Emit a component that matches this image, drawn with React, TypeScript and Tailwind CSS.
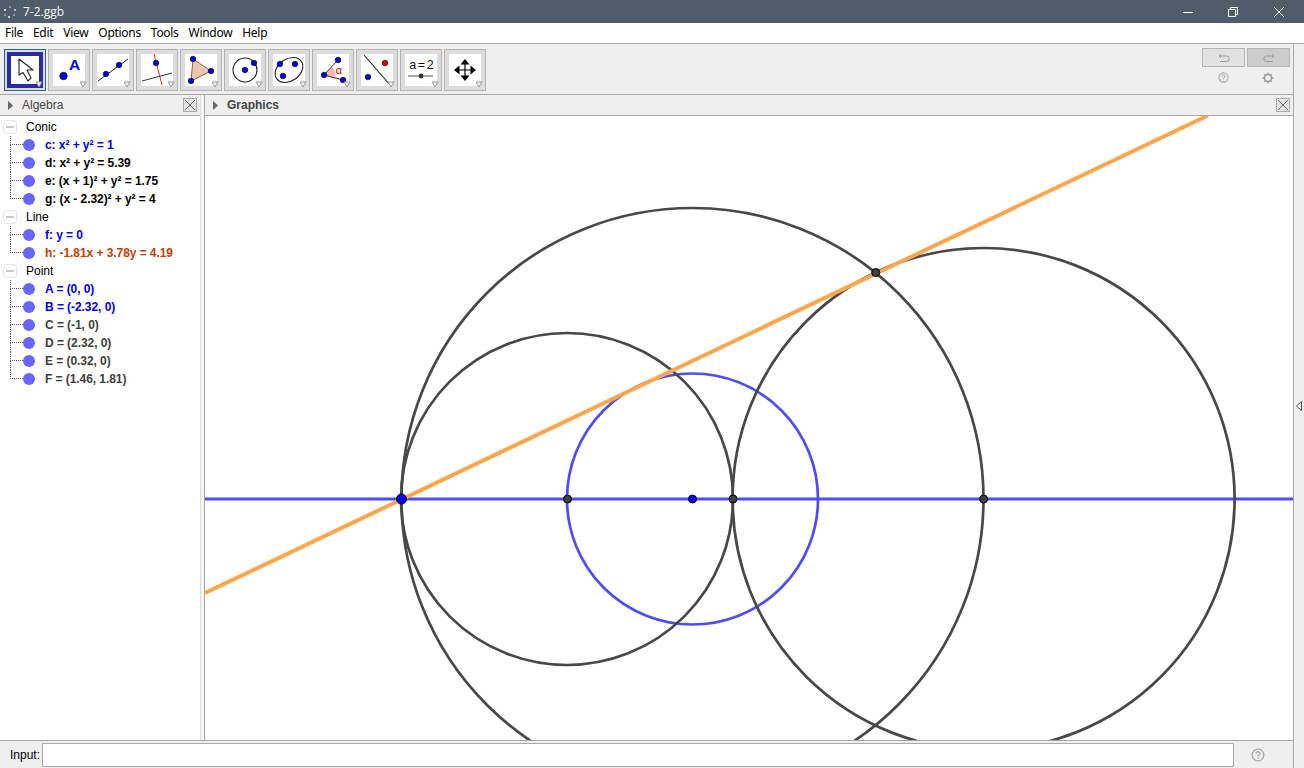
import type { ReactNode } from "react";

const conics = [
  { text: <>c: x² + y² = 1</>, color: "text-[#0000ff]" },
  { text: <>d: x² + y² = 5.39</>, color: "text-black" },
  { text: <>e: (x + 1)² + y² = 1.75</>, color: "text-black" },
  { text: <>g: (x - 2.32)² + y² = 4</>, color: "text-black" },
];
const lines = [
  { text: <>f: y = 0</>, color: "text-[#0000ff]" },
  { text: <>h: -1.81x + 3.78y = 4.19</>, color: "text-[#c83c00]" },
];
const points = [
  { text: <>A = (0, 0)</>, color: "text-[#0000ff]" },
  { text: <>B = (-2.32, 0)</>, color: "text-[#0000ff]" },
  { text: <>C = (-1, 0)</>, color: "text-[#404040]" },
  { text: <>D = (2.32, 0)</>, color: "text-[#404040]" },
  { text: <>E = (0.32, 0)</>, color: "text-[#404040]" },
  { text: <>F = (1.46, 1.81)</>, color: "text-[#404040]" },
];

function Group({ name, items }: { name: string; items: { text: ReactNode; color: string }[] }) {
  return (
    <div>
      <div className="flex h-[18px] items-center">
        <div className="ml-[3px] flex h-[14px] w-[14px] items-center justify-center rounded-[3px] border border-[#e6e6e6]">
          <div className="h-[2px] w-[8px] bg-[#c8c8c8]" />
        </div>
        <span className="ml-[9px] text-[12px] text-black">{name}</span>
      </div>
      {items.map((item, i) => (
        <div key={i} className="flex h-[18px] items-center">
          <div className="ml-[10px] h-[18px] w-[13px] flex-none">
            <div className="h-[9px] border-b border-l border-dotted border-[#555]" />
            {i < items.length - 1 && <div className="h-[9px] border-l border-dotted border-[#555]" />}
          </div>
          <div className="h-[12px] w-[12px] flex-none rounded-full bg-[#6666ff]" />
          <span className={`ml-[10px] text-[12px] font-bold tracking-[-0.06px] whitespace-nowrap ${item.color}`}>{item.text}</span>
        </div>
      ))}
    </div>
  );
}

function Dot({ x, y, r = 2.8, fill = "#0000e0" }: { x: number; y: number; r?: number; fill?: string }) {
  return <circle cx={x} cy={y} r={r} fill={fill} stroke="#000" strokeWidth="0.6" />;
}

function Corner() {
  return (
    <svg className="absolute right-[2px] bottom-[2px]" width="8" height="7" viewBox="0 0 8 7">
      <path d="M1 1h6L4 6z" fill="#f4f4f4" stroke="#999" />
    </svg>
  );
}

function Tool({ children }: { children: ReactNode }) {
  return (
    <div className="relative flex h-[42px] w-[42px] flex-none items-center justify-center border border-[#b4b4b4] bg-[#dcdcdc]">
      <div className="h-[32px] w-[32px] bg-white">
        <svg width="32" height="32" viewBox="0 0 32 32">{children}</svg>
      </div>
      <Corner />
    </div>
  );
}

function CloseBox() {
  return (
    <div className="flex h-[14px] w-[14px] flex-none items-center justify-center border border-[#aaa] bg-[#e4e4e4]">
      <svg width="12" height="12" viewBox="0 0 12 12">
        <path d="M1 1l10 10M11 1L1 11" stroke="#666" strokeWidth="1" />
      </svg>
    </div>
  );
}

function HelpIcon({ size }: { size: number }) {
  return (
    <svg width={size} height={size} viewBox="0 0 12 12">
      <circle cx="6" cy="6" r="5" fill="none" stroke="#aaa" strokeWidth="1.200" />
      <path d="M4.400 4.800c0-2.100 3.300-2.100 3.300-.1 0 1.200-1.700 1.200-1.700 2.600M6 8.200v1.200" fill="none" stroke="#aaa" strokeWidth="1.100" />
    </svg>
  );
}

export default function App() {
  return (
    <div className="flex h-[768px] w-[1304px] flex-col overflow-hidden bg-white font-['Liberation_Sans',sans-serif]">
      {/* Title bar */}
      <div className="flex h-[23px] flex-none items-center bg-[#505c6a] text-white">
        <svg className="ml-[3px]" width="14" height="14" viewBox="0 0 14 14">
          <circle cx="7" cy="2" r="1" fill="#8fa8e8" />
          <circle cx="2" cy="5" r="1" fill="#fff" />
          <circle cx="12" cy="5" r="1" fill="#dbe4f5" />
          <circle cx="2" cy="10" r="1" fill="#8fa8e8" />
          <circle cx="11" cy="10" r="1" fill="#8fa8e8" />
          <circle cx="6" cy="12" r="1" fill="#fff" />
        </svg>
        <span className="ml-[6px] font-['Open_Sans',sans-serif] text-[12px]">7-2.ggb</span>
        <div className="ml-auto flex items-center">
          <svg width="10" height="10" viewBox="0 0 10 10" className="mr-[35px]"><path d="M0 5.500h10" stroke="#fff" /></svg>
          <svg width="10" height="10" viewBox="0 0 10 10" className="mr-[36px]"><path d="M.5 2.500h7v7h-7zM2.500 2.500v-2h7v7h-2" fill="none" stroke="#fff" /></svg>
          <svg width="10" height="10" viewBox="0 0 10 10" className="mr-[20px]"><path d="M0 0l10 10M10 0L0 10" stroke="#fff" /></svg>
        </div>
      </div>

      {/* Menu bar */}
      <div className="flex h-[20px] flex-none items-center gap-[10px] pl-[5px] font-['Noto_Sans',sans-serif] text-[12px] tracking-[-0.3px] text-black">
        {["File", "Edit", "View", "Options", "Tools", "Window", "Help"].map((m) => (
          <span key={m}>{m}</span>
        ))}
      </div>

      <div className="flex min-h-0 flex-1 border-t border-[#a8a8a8]">
        <div className="flex min-w-0 flex-1 flex-col">
          {/* Toolbar */}
          <div className="flex h-[51px] flex-none items-start border-b border-[#a8a8a8] bg-[#efefef]">
            <div className="mt-[5px] ml-[4px] flex gap-[2px]">
              <div className="relative flex h-[42px] w-[42px] flex-none items-center justify-center border border-[#1f6a9a] bg-[#dcdcdc]">
                <div className="h-[36px] w-[36px] border-[4px] border-[#2a2aa5] bg-white">
                  <svg width="28" height="28" viewBox="0 0 28 28">
                    <path d="M8 3v16l4-2.500 5 8.500 3-3-4-8h6z" fill="#fff" stroke="#222" strokeWidth="1.100" strokeLinejoin="round" />
                  </svg>
                </div>
                <Corner />
              </div>
              <Tool>
                <Dot x={10.500} y={22} r={3.800} />
                <text x="16" y="16" fontSize="15.500" fontWeight="700" fill="#0000ff" fontFamily="Liberation Sans, sans-serif">A</text>
              </Tool>
              <Tool>
                <path d="M1 27L31 5" stroke="#222" strokeWidth="1" />
                <Dot x={9} y={20} />
                <Dot x={22} y={11} />
              </Tool>
              <Tool>
                <path d="M13 0l8 31" stroke="#e83030" strokeWidth="1" />
                <path d="M1 27l30-8" stroke="#333" strokeWidth="1" />
                <Dot x={15} y={9} />
              </Tool>
              <Tool>
                <path d="M8 5l18 12-20 10z" fill="#e8c8b4" stroke="#a85a30" strokeWidth="1" />
                <Dot x={8} y={5} />
                <Dot x={26} y={17} />
                <Dot x={6} y={27} />
              </Tool>
              <Tool>
                <circle cx="16" cy="16" r="12" fill="none" stroke="#222" strokeWidth="1.100" />
                <Dot x={16} y={16} />
                <Dot x={25} y={9} />
              </Tool>
              <Tool>
                <ellipse cx="16" cy="16" rx="15" ry="11" fill="none" stroke="#222" strokeWidth="1.100" transform="rotate(-35 16 16)" />
                <Dot x={7} y={10} />
                <Dot x={22} y={10} />
                <Dot x={10} y={22} />
              </Tool>
              <Tool>
                <path d="M7 21l7.500-8.500a11.500 11.500 0 0 1 3.500 12.500z" fill="#f8b8b8" />
                <path d="M7 21L21 6M7 21l19 5" stroke="#333" strokeWidth="1" />
                <Dot x={7} y={21} />
                <Dot x={21} y={6} />
                <Dot x={26} y={26} />
                <text x="22" y="20" fontSize="11" textAnchor="middle" fill="#e00000" fontFamily="Liberation Sans, sans-serif">α</text>
              </Tool>
              <Tool>
                <path d="M3 1l26 30" stroke="#222" strokeWidth="1.100" />
                <Dot x={24} y={9} fill="#e00000" />
                <Dot x={7} y={23} />
              </Tool>
              <Tool>
                <text x="16" y="15" fontSize="12.500" letterSpacing="-0.9" textAnchor="middle" fill="#111" fontFamily="Liberation Sans, sans-serif">a = 2</text>
                <path d="M3 22h25" stroke="#555" strokeWidth="1" />
                <circle cx="16" cy="22" r="2.400" fill="#333" />
              </Tool>
              <Tool>
                <path d="M16 8v16M8 16h16" stroke="#000" strokeWidth="1.200" />
                <path d="M16 5l-4.500 5.500h9zM16 27l-4.500-5.500h9zM5 16l5.500-4.500v9zM27 16l-5.500-4.500v9z" fill="#000" />
              </Tool>
            </div>
            <div className="mt-[4px] mr-[3px] ml-auto w-[88px]">
              <div className="flex gap-[2px]">
                <div className="flex h-[19px] w-[43px] items-center justify-center border border-[#b4b4b4] bg-[#e2e2e2]">
                  <svg width="12" height="10" viewBox="0 0 12 10"><path d="M3 1L1 3l2 2M1 3h7.500a2.500 2.500 0 0 1 0 5.500H2" fill="none" stroke="#999" strokeWidth="1" /></svg>
                </div>
                <div className="flex h-[19px] w-[43px] items-center justify-center border border-[#b4b4b4] bg-[#cccccc]">
                  <svg width="12" height="10" viewBox="0 0 12 10"><path d="M9 1l2 2-2 2M11 3H3.500a2.500 2.500 0 0 0 0 5.500H10" fill="none" stroke="#999" strokeWidth="1" /></svg>
                </div>
              </div>
              <div className="mt-[5px] flex">
                <div className="flex w-[42px] justify-center"><HelpIcon size={11} /></div>
                <div className="ml-[3px] flex w-[42px] justify-center">
                  <svg width="12" height="12" viewBox="0 0 12 12">
                    <circle cx="6" cy="6" r="3.500" fill="none" stroke="#999" strokeWidth="1.500" />
                    <path d="M6 .5v2M6 9.500v2M.5 6h2M9.500 6h2M2.100 2.100l1.400 1.400M8.500 8.500l1.400 1.400M9.900 2.100L8.500 3.500M3.500 8.500l-1.400 1.400" stroke="#999" strokeWidth="1.300" />
                  </svg>
                </div>
              </div>
            </div>
          </div>

          <div className="flex min-h-0 flex-1">
            {/* Algebra */}
            <div className="w-[205px] flex-none border-r border-[#a8a8a8] bg-[#f6f6f6] pr-[3px]">
              <div className="h-full border-r border-[#dddddd] bg-white">
                <div className="flex h-[21px] items-center border-b border-[#a8a8a8] bg-[#efefef] pr-[3px] pl-[8px]">
                  <svg width="5" height="9" viewBox="0 0 5 9"><path d="M0 0l5 4.500L0 9z" fill="#666" /></svg>
                  <span className="ml-[9px] text-[12px] text-[#444]">Algebra</span>
                  <div className="ml-auto"><CloseBox /></div>
                </div>
                <div className="pt-[2px]">
                  <Group name="Conic" items={conics} />
                  <Group name="Line" items={lines} />
                  <Group name="Point" items={points} />
                </div>
              </div>
            </div>

            {/* Graphics */}
            <div className="flex min-w-0 flex-1 flex-col">
              <div className="flex h-[21px] flex-none items-center border-b border-[#a8a8a8] bg-[#efefef] pr-[3px] pl-[8px]">
                <svg width="5" height="9" viewBox="0 0 5 9"><path d="M0 0l5 4.500L0 9z" fill="#666" /></svg>
                <span className="ml-[9px] text-[12px] font-bold text-[#444]">Graphics</span>
                <div className="ml-auto"><CloseBox /></div>
              </div>
              <svg className="block min-h-0 flex-1" width="1088" viewBox="205 116 1088 624">
                <g fill="none" strokeWidth="2.700">
                  <circle cx="692.500" cy="499" r="125.500" stroke="#4d4dff" />
                  <path d="M205 499H1293" stroke="#4d4dff" strokeWidth="3" />
                  <circle cx="692.500" cy="499" r="291" stroke="#484848" />
                  <circle cx="567" cy="499" r="166" stroke="#484848" />
                  <circle cx="983.600" cy="499" r="251" stroke="#484848" />
                  <path d="M205 593L1208 115.500" stroke="#ffa64d" strokeWidth="4" />
                </g>
                <g stroke="#000" strokeWidth="1">
                  <circle cx="401.500" cy="499" r="5" fill="#0000ff" />
                  <circle cx="692.500" cy="499" r="4" fill="#0000ff" />
                  <circle cx="567.500" cy="499" r="4" fill="#404040" />
                  <circle cx="733" cy="499" r="4" fill="#404040" />
                  <circle cx="983.600" cy="499" r="4" fill="#404040" />
                  <circle cx="875.700" cy="272.500" r="4" fill="#404040" />
                </g>
              </svg>
            </div>
          </div>

          {/* Input bar */}
          <div className="flex h-[28px] flex-none items-center border-t border-[#a8a8a8] bg-[#efefef] pl-[10px]">
            <span className="text-[12px] text-black">Input:</span>
            <div className="ml-[2px] h-[24px] w-[1192px] border border-[#aaa] bg-white" />
            <div className="ml-[17px]"><HelpIcon size={14} /></div>
          </div>
        </div>

        {/* Right strip */}
        <div className="flex w-[11px] flex-none items-center justify-center border-l border-[#a8a8a8] bg-[#efefef]">
          <svg className="mr-[1px]" width="6" height="10" viewBox="0 0 6 10"><path d="M5.500.5v9L.5 5z" fill="#fff" stroke="#555" /></svg>
        </div>
      </div>
    </div>
  );
}
